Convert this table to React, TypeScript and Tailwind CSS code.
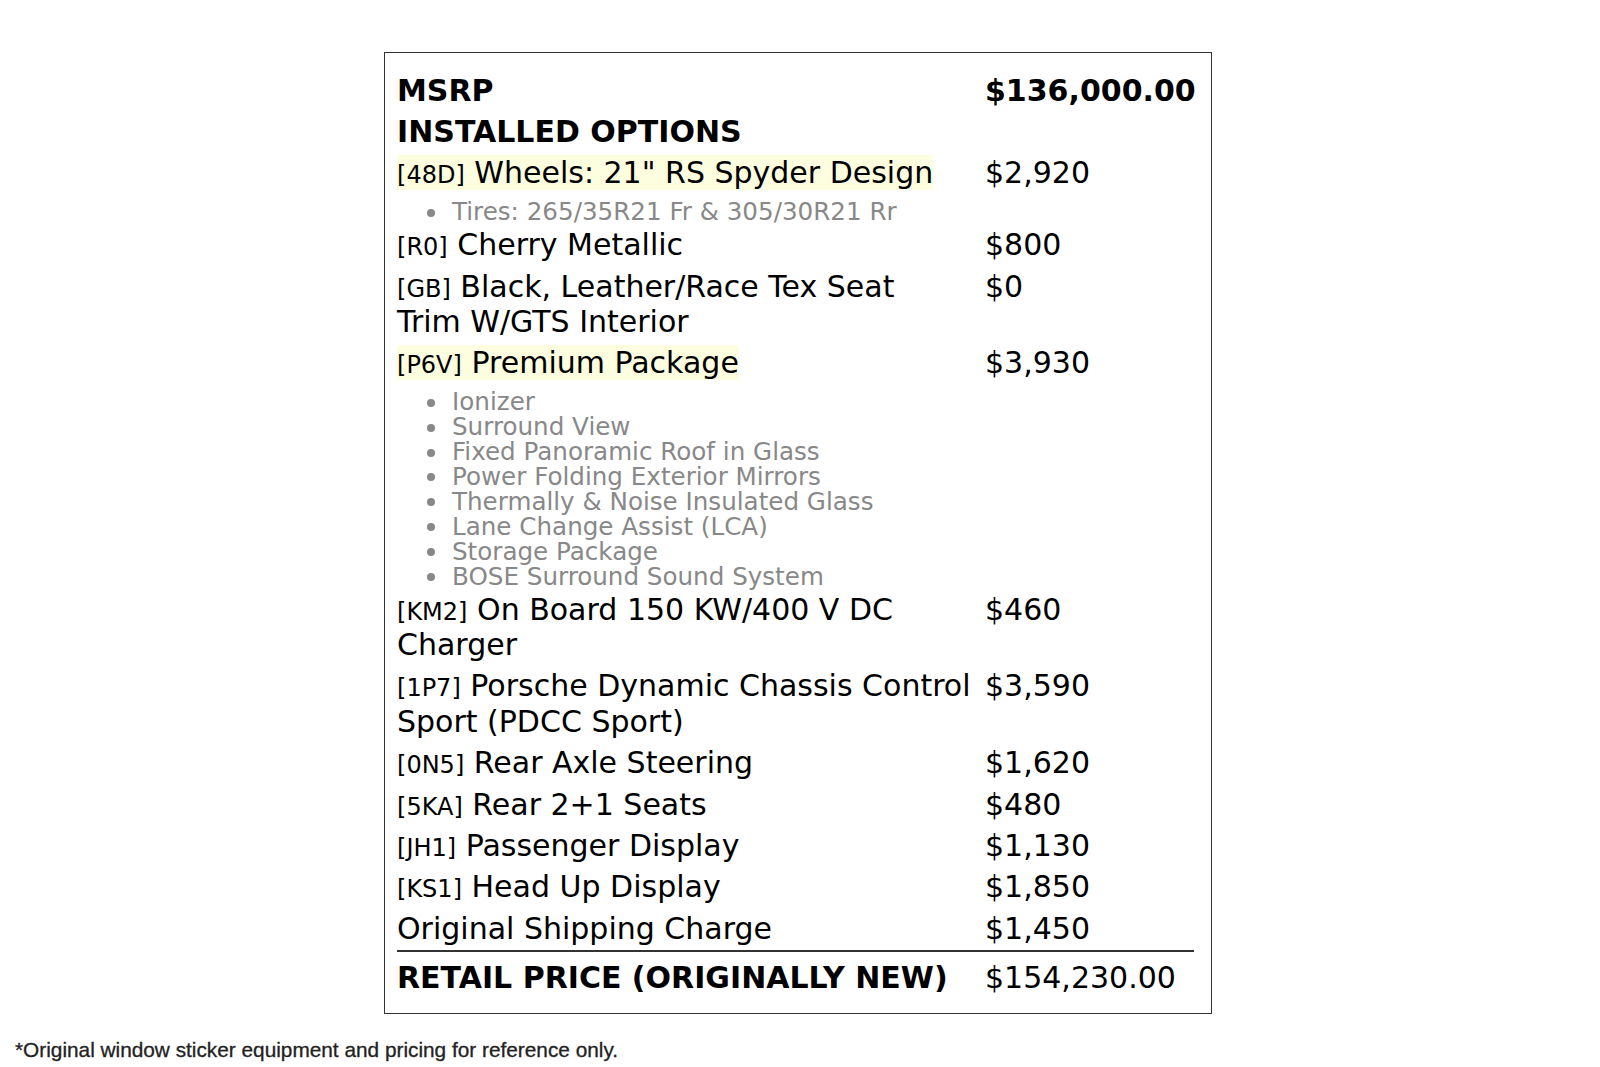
import React from 'react';

type Option = {
  code?: string;
  name: React.ReactNode;
  price: string;
  highlight?: boolean;
  details?: string[];
};

const options: Option[] = [
  {
    code: '48D',
    name: 'Wheels: 21" RS Spyder Design',
    price: '$2,920',
    highlight: true,
    details: ['Tires: 265/35R21 Fr & 305/30R21 Rr'],
  },
  { code: 'R0', name: 'Cherry Metallic', price: '$800' },
  {
    code: 'GB',
    name: (
      <>
        Black, Leather/Race Tex Seat
        <br />
        Trim W/GTS Interior
      </>
    ),
    price: '$0',
  },
  {
    code: 'P6V',
    name: 'Premium Package',
    price: '$3,930',
    highlight: true,
    details: [
      'Ionizer',
      'Surround View',
      'Fixed Panoramic Roof in Glass',
      'Power Folding Exterior Mirrors',
      'Thermally & Noise Insulated Glass',
      'Lane Change Assist (LCA)',
      'Storage Package',
      'BOSE Surround Sound System',
    ],
  },
  { code: 'KM2', name: 'On Board 150 KW/400 V DC Charger', price: '$460' },
  { code: '1P7', name: 'Porsche Dynamic Chassis Control Sport (PDCC Sport)', price: '$3,590' },
  { code: '0N5', name: 'Rear Axle Steering', price: '$1,620' },
  { code: '5KA', name: 'Rear 2+1 Seats', price: '$480' },
  { code: 'JH1', name: 'Passenger Display', price: '$1,130' },
  { code: 'KS1', name: 'Head Up Display', price: '$1,850' },
  { name: 'Original Shipping Charge', price: '$1,450' },
];

const Row: React.FC<{ left: React.ReactNode; right?: React.ReactNode; bold?: boolean }> = ({ left, right, bold }) => (
  <div className={`grid grid-cols-[578px_1fr] gap-x-[10px] py-[3px] leading-[35.4px] ${bold ? 'font-bold' : ''}`}>
    <div>{left}</div>
    <div>{right}</div>
  </div>
);

const OptionLabel: React.FC<{ opt: Option }> = ({ opt }) => {
  const inner = (
    <>
      {opt.code && <span className="text-[24px] leading-none">[{opt.code}]</span>}
      {opt.code && ' '}
      {opt.name}
    </>
  );
  return opt.highlight ? <span className="bg-[#fdfde0]">{inner}</span> : inner;
};

export default function App() {
  return (
    <div className="min-h-[1067px] bg-white text-black font-['DejaVu_Sans',sans-serif]">
      <div className="pt-[52px] pl-[384px]">
        <div className="w-[828px] border border-[#333] pl-[12px] pr-[17px] pt-[16.5px] pb-[18px] text-[30px]">
          <Row bold left="MSRP" right="$136,000.00" />
          <Row bold left="INSTALLED OPTIONS" />
          {options.map((opt, i) => (
            <div key={i}>
              <Row left={<OptionLabel opt={opt} />} right={opt.price} />
              {opt.details && (
                <ul className="pt-[6.5px] -mb-[1px] text-[24.6px] leading-[24.9px] text-[#888]">
                  {opt.details.map((d, j) => (
                    <li key={j} className="flex items-center">
                      <span className="ml-[30px] mr-[17px] h-[8px] w-[8px] shrink-0 rounded-full bg-[#888]" />
                      <span>{d}</span>
                    </li>
                  ))}
                </ul>
              )}
            </div>
          ))}
          <div className="mt-[1px] border-t-2 border-[#333]" />
          <div className="grid grid-cols-[578px_1fr] gap-x-[10px] pt-[8px] leading-[35px]">
            <div className="font-bold">RETAIL PRICE (ORIGINALLY NEW)</div>
            <div>$154,230.00</div>
          </div>
        </div>
      </div>
      <p className="mt-[24px] pl-[15px] font-['Liberation_Sans',Arial,sans-serif] text-[20.8px] leading-[24px] text-[#222] [-webkit-text-stroke:0.3px_#222]">
        *Original window sticker equipment and pricing for reference only.
      </p>
    </div>
  );
}
